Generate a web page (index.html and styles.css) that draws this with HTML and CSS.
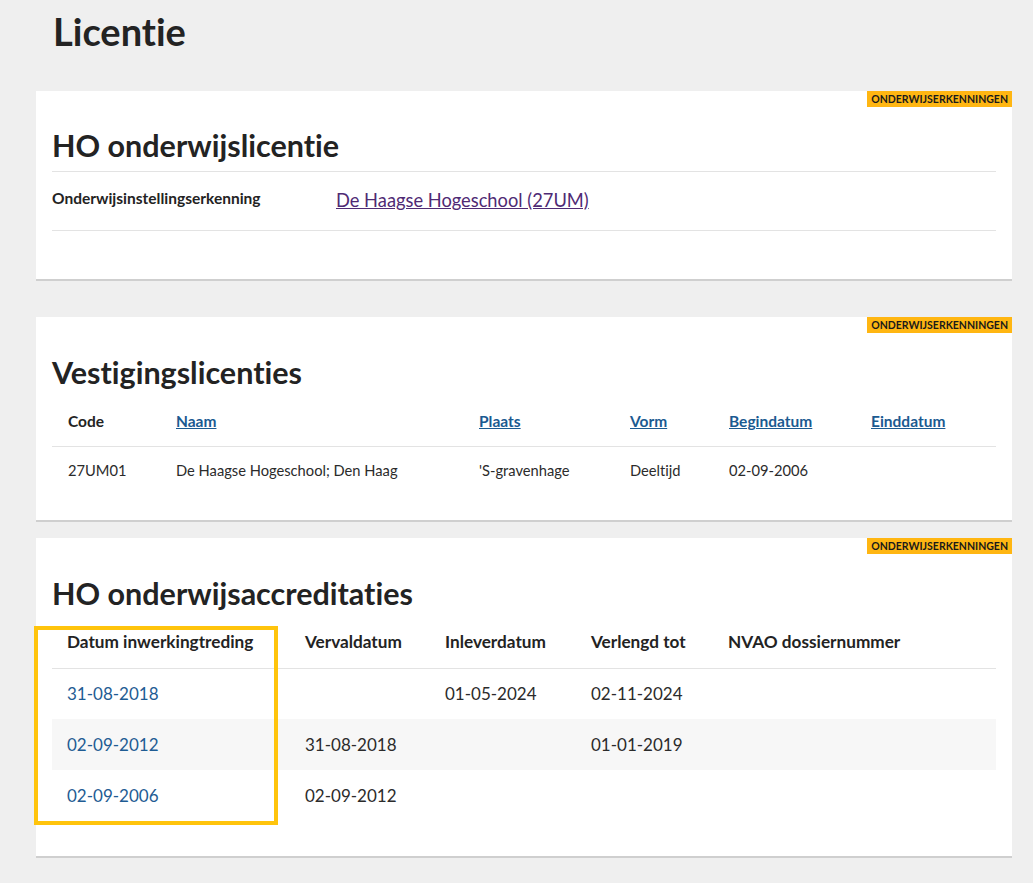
FILE: index.html
```html
<!DOCTYPE html>
<html lang="nl">
<head>
<meta charset="utf-8">
<title>Licentie</title>
<link rel="stylesheet" href="styles.css">
</head>
<body>
<main class="page">
  <h1 class="title">Licentie</h1>

  <section class="card card-first">
    <span class="badge">Onderwijserkenningen</span>
    <h2 class="card-title with-rule">HO onderwijslicentie</h2>
    <dl class="props">
      <dt>Onderwijsinstellingserkenning</dt>
      <dd><a class="visited-link" href="#">De Haagse Hogeschool (27UM)</a></dd>
    </dl>
  </section>

  <section class="card card-second">
    <span class="badge">Onderwijserkenningen</span>
    <h2 class="card-title">Vestigingslicenties</h2>
    <table class="tbl tbl-vest">
      <thead>
        <tr>
          <th class="c-code">Code</th>
          <th class="c-naam"><a href="#">Naam</a></th>
          <th class="c-plaats"><a href="#">Plaats</a></th>
          <th class="c-vorm"><a href="#">Vorm</a></th>
          <th class="c-begin"><a href="#">Begindatum</a></th>
          <th><a href="#">Einddatum</a></th>
        </tr>
      </thead>
      <tbody>
        <tr>
          <td>27UM01</td>
          <td>De Haagse Hogeschool; Den Haag</td>
          <td>'S-gravenhage</td>
          <td>Deeltijd</td>
          <td>02-09-2006</td>
          <td></td>
        </tr>
      </tbody>
    </table>
  </section>

  <section class="card card-third">
    <span class="badge">Onderwijserkenningen</span>
    <h2 class="card-title">HO onderwijsaccreditaties</h2>
    <table class="tbl tbl-accr">
      <thead>
        <tr>
          <th class="c-datum">Datum inwerkingtreding</th>
          <th class="c-verval">Vervaldatum</th>
          <th class="c-inlever">Inleverdatum</th>
          <th class="c-verlengd">Verlengd tot</th>
          <th>NVAO dossiernummer</th>
        </tr>
      </thead>
      <tbody>
        <tr>
          <td><a class="date-link" href="#">31-08-2018</a></td>
          <td></td>
          <td>01-05-2024</td>
          <td>02-11-2024</td>
          <td></td>
        </tr>
        <tr class="striped">
          <td><a class="date-link" href="#">02-09-2012</a></td>
          <td>31-08-2018</td>
          <td></td>
          <td>01-01-2019</td>
          <td></td>
        </tr>
        <tr>
          <td><a class="date-link" href="#">02-09-2006</a></td>
          <td>02-09-2012</td>
          <td></td>
          <td></td>
          <td></td>
        </tr>
      </tbody>
    </table>
    <div class="highlight" aria-hidden="true"></div>
  </section>
</main>
</body>
</html>
```

FILE: styles.css
```css
* { box-sizing: border-box; }

html, body {
  margin: 0;
  padding: 0;
  background: #efefef;
}

body {
  font-family: "Lato", "Noto Sans", "Liberation Sans", sans-serif;
  font-variant-ligatures: none;
  color: #232323;
}

.page {
  width: 976px;
  margin-left: 36px;
  padding-bottom: 40px;
}

.title {
  margin: 8px 0 0 17px;
  font-size: 38px;
  line-height: 46px;
  font-weight: 700;
  color: #232323;
}

.card {
  position: relative;
  background: #fff;
  border-bottom: 2px solid #cfcfcf;
  padding: 0 16px;
}

.card-first { margin-top: 37px; padding-top: 34px; padding-bottom: 48px; }
.card-second { margin-top: 36px; padding-top: 35px; padding-bottom: 26px; }
.card-third { margin-top: 16px; padding-top: 35px; padding-bottom: 35px; }

.badge {
  position: absolute;
  top: 0;
  right: 0;
  height: 16px;
  padding: 0 4px;
  background: #ffb612;
  color: #1a1a1a;
  font-size: 10.5px;
  line-height: 16px;
  font-weight: 700;
  text-transform: uppercase;
  letter-spacing: 0;
}

.card-title {
  margin: 0;
  font-size: 30.5px;
  line-height: 40px;
  font-weight: 700;
  color: #232323;
}

.with-rule {
  padding-bottom: 6px;
  border-bottom: 1px solid #e3e3e3;
}

.props {
  display: flex;
  margin: 0;
  height: 59px;
  border-bottom: 1px solid #e3e3e3;
  align-items: flex-start;
}

.props dt {
  width: 284px;
  padding-top: 17px;
  font-size: 15.5px;
  font-weight: 700;
  line-height: 18px;
}

.props dd {
  margin: 0;
  padding-top: 16px;
  font-size: 18.3px;
  line-height: 24px;
}

.visited-link {
  color: #4f2a74;
  text-decoration: underline;
}

.tbl {
  width: 100%;
  border-collapse: collapse;
  table-layout: fixed;
  font-size: 15px;
}

.tbl th {
  text-align: left;
  font-weight: 700;
  padding: 0 16px;
  border-bottom: 1px solid #e3e3e3;
}

.tbl td {
  padding: 0 16px;
  color: #2b2b2b;
}

.tbl-vest { margin-top: 5px; font-size: 14.7px; }
.tbl-vest th { height: 49px; font-size: 15.5px; }
.tbl-vest td { height: 48px; }

.tbl-vest th a {
  color: #1b5a91;
  text-decoration: underline;
}

.c-code { width: 108px; }
.c-naam { width: 303px; }
.c-plaats { width: 151px; }
.c-vorm { width: 99px; }
.c-begin { width: 142px; }

.tbl-accr { margin-top: 3px; font-size: 17px; }
.tbl-accr th { height: 52px; padding-left: 15px; font-size: 17.2px; }
.tbl-accr td { height: 51px; padding-left: 15px; }

.c-datum { width: 238px; }
.c-verval { width: 140px; }
.c-inlever { width: 146px; }
.c-verlengd { width: 137px; }

.striped td { background: #f7f7f7; }

.date-link {
  color: #1f5c93;
  text-decoration: none;
}

.highlight {
  position: absolute;
  left: -2px;
  top: 88px;
  width: 244px;
  height: 199px;
  border: 4px solid #ffc40c;
  pointer-events: none;
}
```
